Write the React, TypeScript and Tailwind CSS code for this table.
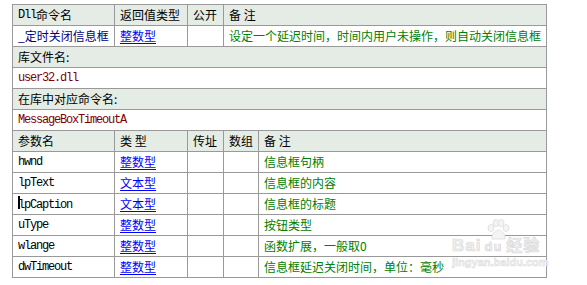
const cjk = '"Noto Sans CJK SC", "Liberation Sans", sans-serif'
const mono = '"Liberation Mono", "Noto Sans CJK SC", monospace'

const td = "border border-[#999] p-0 text-[12px] whitespace-nowrap align-middle"
const head = td + " bg-[#e5ece5] text-black"

function Cell({ children }: { children?: React.ReactNode }) {
  return <div className="h-[20px] px-[5px] flex items-center leading-[14px] overflow-hidden">{children}</div>
}

function Code({ children, red }: { children: React.ReactNode; red?: boolean }) {
  return (
    <span
      className={"text-[12px] leading-[14px] tracking-[-1.2px] " + (red ? "text-[#800000]" : "text-black")}
      style={{ fontFamily: mono }}
    >
      {children}
    </span>
  )
}

function Type({ children }: { children: React.ReactNode }) {
  return <span className="text-[#0000ff] underline underline-offset-2">{children}</span>
}

const params = [
  ["hwnd", "整数型", "信息框句柄"],
  ["lpText", "文本型", "信息框的内容"],
  ["lpCaption", "文本型", "信息框的标题"],
  ["uType", "整数型", "按钮类型"],
  ["wlange", "整数型", "函数扩展，一般取0"],
  ["dwTimeout", "整数型", "信息框延迟关闭时间，单位：毫秒"],
]

export default function App() {
  return (
    <div className="relative w-[587px] h-[285px] bg-white pt-[4px] pl-[12px]" style={{ fontFamily: cjk }}>
      <table className="border-collapse table-fixed w-[535px]">
        <colgroup>
          <col className="w-[102px]" />
          <col className="w-[73px]" />
          <col className="w-[36px]" />
          <col className="w-[35px]" />
          <col />
        </colgroup>
        <tbody>
          <tr>
            <td className={head}>
              <Cell>
                <span style={{ fontFamily: mono }} className="text-[12px] tracking-[-1.2px]">Dll</span>命令名
              </Cell>
            </td>
            <td className={head}><Cell>返回值类型</Cell></td>
            <td className={head}><Cell>公开</Cell></td>
            <td className={head} colSpan={2}><Cell>备&nbsp;注</Cell></td>
          </tr>
          <tr>
            <td className={td}>
              <Cell>
                <span className="text-[#000080]">_定时关闭信息框</span>
              </Cell>
            </td>
            <td className={td}>
              <Cell>
                <Type>整数型</Type>
              </Cell>
            </td>
            <td className={td}><Cell /></td>
            <td className={td + " text-[#008000]"} colSpan={2}>
              <Cell>设定一个延迟时间，时间内用户未操作，则自动关闭信息框</Cell>
            </td>
          </tr>
          <tr>
            <td className={head} colSpan={5}><Cell>库文件名:</Cell></td>
          </tr>
          <tr>
            <td className={td} colSpan={5}>
              <Cell>
                <Code red>user32.dll</Code>
              </Cell>
            </td>
          </tr>
          <tr>
            <td className={head} colSpan={5}><Cell>在库中对应命令名:</Cell></td>
          </tr>
          <tr>
            <td className={td} colSpan={5}>
              <Cell>
                <Code red>MessageBoxTimeoutA</Code>
              </Cell>
            </td>
          </tr>
          <tr>
            <td className={head}><Cell>参数名</Cell></td>
            <td className={head}><Cell>类&nbsp;型</Cell></td>
            <td className={head}><Cell>传址</Cell></td>
            <td className={head}><Cell>数组</Cell></td>
            <td className={head}><Cell>备&nbsp;注</Cell></td>
          </tr>
          {params.map(([name, type, note]) => (
            <tr key={name}>
              <td className={td}>
                <Cell>
                  {name === "lpCaption" ? (
                    <span className="relative">
                      <span className="absolute left-0 top-[0px] w-[2px] h-[13px] bg-black" />
                      <Code>{name}</Code>
                    </span>
                  ) : (
                    <Code>{name}</Code>
                  )}
                </Cell>
              </td>
              <td className={td}>
                <Cell>
                  <Type>{type}</Type>
                </Cell>
              </td>
              <td className={td}><Cell /></td>
              <td className={td}><Cell /></td>
              <td className={td + " text-[#008000]"}><Cell>{note}</Cell></td>
            </tr>
          ))}
        </tbody>
      </table>

      <div
        className="absolute left-[452px] top-[219px] w-[104px] h-[50px] pointer-events-none select-none text-[#f2f2f2]"
        style={{ fontFamily: '"Liberation Sans", "Noto Sans CJK SC", sans-serif' }}
      >
        <svg className="absolute left-[33px] top-0" width="26" height="22" viewBox="0 0 26 22">
          <g fill="#f4f4f4" stroke="#dcdcdc" strokeWidth="0.8">
            <ellipse cx="6" cy="9" rx="3" ry="3.5" />
            <ellipse cx="11" cy="4" rx="3" ry="3.5" />
            <ellipse cx="16" cy="4" rx="3" ry="3.5" />
            <ellipse cx="21" cy="9" rx="3" ry="3.5" />
            <path d="M7 20 C 6 14, 12 11, 13.5 11 C 15 11, 21 14, 20 20 Z" />
          </g>
        </svg>
        <div
          className="absolute left-0 top-[17px] text-[17px] font-bold leading-[20px] tracking-[1px]"
          style={{ WebkitTextStroke: "0.7px #d8d8d8" }}
        >
          Bai<span className="text-[13px] ml-[3px] mr-[4px]">du</span>
          <span className="text-[16px]">经验</span>
        </div>
        <div
          className="absolute left-0 top-[37px] text-[11px] font-bold leading-[12px]"
          style={{ WebkitTextStroke: "0.5px #dcdcdc" }}
        >
          jingyan.baidu.com
        </div>
      </div>
    </div>
  )
}
